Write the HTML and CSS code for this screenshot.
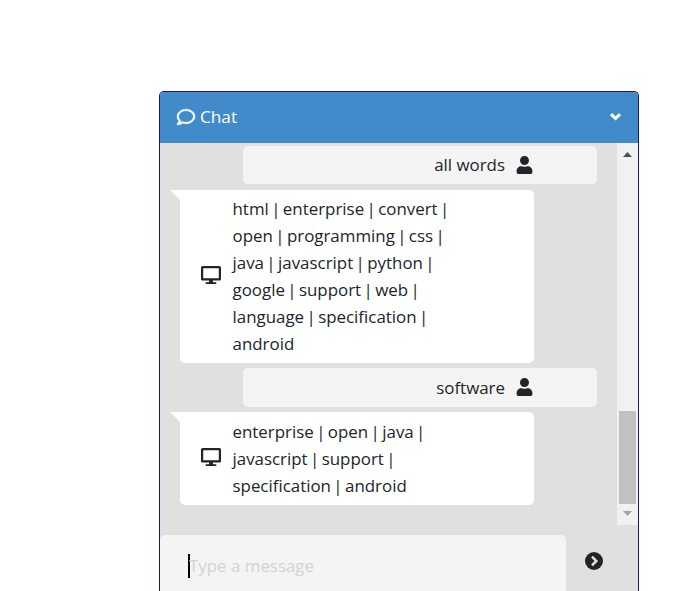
FILE: index.html
```html
<!DOCTYPE html>
<html lang="en">
<head>
<meta charset="utf-8">
<title>Chat</title>
<link rel="stylesheet" href="styles.css">
</head>
<body>
<svg class="defs" width="0" height="0" aria-hidden="true">
  <symbol id="user" viewBox="0 0 448 512"><path d="M224 256c70.7 0 128-57.3 128-128S294.7 0 224 0 96 57.3 96 128s57.300 128 128 128zm89.600 32h-16.700c-22.200 10.200-46.900 16-72.900 16s-50.600-5.800-72.900-16h-16.700C60.200 288 0 348.200 0 422.400V464c0 26.500 21.500 48 48 48h352c26.500 0 48-21.500 48-48v-41.600c0-74.200-60.200-134.400-134.400-134.400z"/></symbol>
  <symbol id="desktop" viewBox="0 0 576 512"><path d="M528 0H48C21.500 0 0 21.500 0 48v320c0 26.500 21.500 48 48 48h192l-16 48h-72c-13.300 0-24 10.700-24 24s10.700 24 24 24h272c13.300 0 24-10.700 24-24s-10.700-24-24-24h-72l-16-48h192c26.500 0 48-21.500 48-48V48c0-26.500-21.500-48-48-48zm-16 352H64V64h448v288z"/></symbol>
</svg>
<div class="chat">
  <header class="chat-header">
    <svg class="icon-comment" viewBox="0 0 512 512"><path d="M256 32C114.600 32 0 125.100 0 240c0 47.600 19.900 91.200 52.900 126.300C38 405.700 7 439.100 6.500 439.500c-6.600 7-8.400 17.200-4.600 26S14.400 480 24 480c61.500 0 110-25.700 139.100-46.300C192 442.800 223.200 448 256 448c141.400 0 256-93.100 256-208S397.400 32 256 32zm0 368c-26.700 0-53.100-4.100-78.400-12.100l-22.700-7.200-19.500 13.800c-14.300 10.100-33.900 21.400-57.500 29 7.300-12.100 14.400-25.700 19.900-40.200l10.600-28.100-20.600-21.800C69.700 314.100 48 282.200 48 240c0-88.200 93.300-160 208-160s208 71.800 208 160-93.300 160-208 160z"/></svg>
    <span class="chat-title">Chat</span>
    <svg class="icon-chevron" viewBox="0 0 13 9"><path d="M2 2.200l4.500 4.300L11 2.200"/></svg>
  </header>
  <div class="viewport">
    <div class="messages">
      <div class="message user first"><span>all words</span><svg class="icon-user"><use href="#user"/></svg></div>
      <div class="message bot long"><svg class="icon-desktop"><use href="#desktop"/></svg>
        <p>html | enterprise | convert |<br>open | programming | css |<br>java | javascript | python |<br>google | support | web |<br>language | specification |<br>android</p></div>
      <div class="message user second"><span>software</span><svg class="icon-user"><use href="#user"/></svg></div>
      <div class="message bot"><svg class="icon-desktop"><use href="#desktop"/></svg>
        <p>enterprise | open | java |<br>javascript | support |<br>specification | android</p></div>
    </div>
    <div class="scrollbar">
      <svg class="arrow" viewBox="0 0 9 5"><path d="M0 5L4.500 0 9 5z"/></svg>
      <div class="thumb"></div>
      <svg class="arrow muted" viewBox="0 0 9 5"><path d="M0 0h9L4.500 5z"/></svg>
    </div>
  </div>
  <footer class="composer">
    <div class="field"><span class="caret"></span><span class="placeholder">Type a message</span></div>
    <svg class="icon-send" viewBox="0 0 18 18"><circle cx="9" cy="9" r="9"/><path d="M7 4.700L11.300 9 7 13.300"/></svg>
  </footer>
</div>
</body>
</html>
```
FILE: styles.css
```css
* { box-sizing: border-box; }
html { height: 100%; }
body {
  margin: 0;
  padding: 91px 0 0 159px;
  height: 591px;
  background: #fff;
  color: #212529;
  font: 16.9px/27px "Open Sans", "Noto Sans", sans-serif;
}
.defs { position: absolute; }
svg { display: block; flex: none; fill: currentColor; }
.chat {
  width: 480px;
  height: 500px;
  border: 1px solid #191970;
  border-bottom: 0;
  border-radius: 5px 5px 0 0;
  background: #e0e0de;
  overflow: hidden;
}
.chat-header {
  display: flex;
  align-items: center;
  height: 51px;
  padding: 0 16px 0 17px;
  background: #428bca;
  color: #fff;
}
.icon-comment {
  width: 18px;
  height: 18px;
  margin-top: -2px;
  overflow: visible;
  stroke: #fff;
  stroke-width: 12;
}
.chat-title { margin: -2px 0 0 5px; font-size: 17.2px; }
.icon-chevron {
  width: 13px;
  height: 9px;
  margin: -3px 0 0 auto;
  fill: none;
  stroke: #fff;
  stroke-width: 3;
}
.viewport { display: flex; height: 382px; }
.messages { width: 457px; padding-top: 3px; }
.message {
  display: flex;
  align-items: center;
  width: 354px;
  border-radius: 5px;
}
.user {
  justify-content: flex-end;
  height: 38px;
  margin-left: 83px;
  padding-right: 64px;
  background: #f4f4f4;
}
.first { padding-bottom: 2px; }
.first .icon-user { margin-top: 1px; }
.second { height: 39px; padding-bottom: 1px; }
.icon-user { width: 17px; height: 18px; margin-left: 11px; }
.bot {
  position: relative;
  height: 93px;
  margin: 5px 0 5px 20px;
  padding-left: 21px;
  background: #fff;
  border-top-left-radius: 0;
}
.long { height: 173px; margin-top: 6px; }
.bot::before {
  content: "";
  position: absolute;
  top: 0;
  left: -10px;
  width: 10px;
  height: 10px;
  background: #fff;
  clip-path: polygon(0 0, 100% 0, 100% 100%);
}
.icon-desktop { width: 20px; height: 18px; margin-top: -3px; }
.bot p { margin: 0 0 0 11.500px; white-space: nowrap; word-spacing: -2px; }
.long p { margin-bottom: 2px; }
.scrollbar {
  display: flex;
  flex-direction: column;
  align-items: center;
  width: 21px;
  background: #f1f1f1;
}
.arrow { width: 9px; height: 5px; margin-top: 9px; fill: #505050; }
.thumb { width: 17px; height: 93px; margin-top: 254px; background: #c1c1c1; }
.muted { margin-top: 7px; fill: #a3a3a3; }
.composer { display: flex; align-items: flex-start; padding-top: 10px; }
.field {
  display: flex;
  align-items: flex-start;
  width: 406px;
  height: 56px;
  padding: 17px 0 0 28px;
  border-radius: 5px 5px 0 0;
  background: #f4f4f4;
}
.caret { width: 2px; height: 24px; margin: 2px -1px 0 0; background: #000; }
.placeholder { color: #d3d3d3; }
.icon-send { width: 18px; height: 18px; margin: 17px 0 0 18.500px; }
.icon-send path { fill: none; stroke: #e0e0de; stroke-width: 2.500; }
```
